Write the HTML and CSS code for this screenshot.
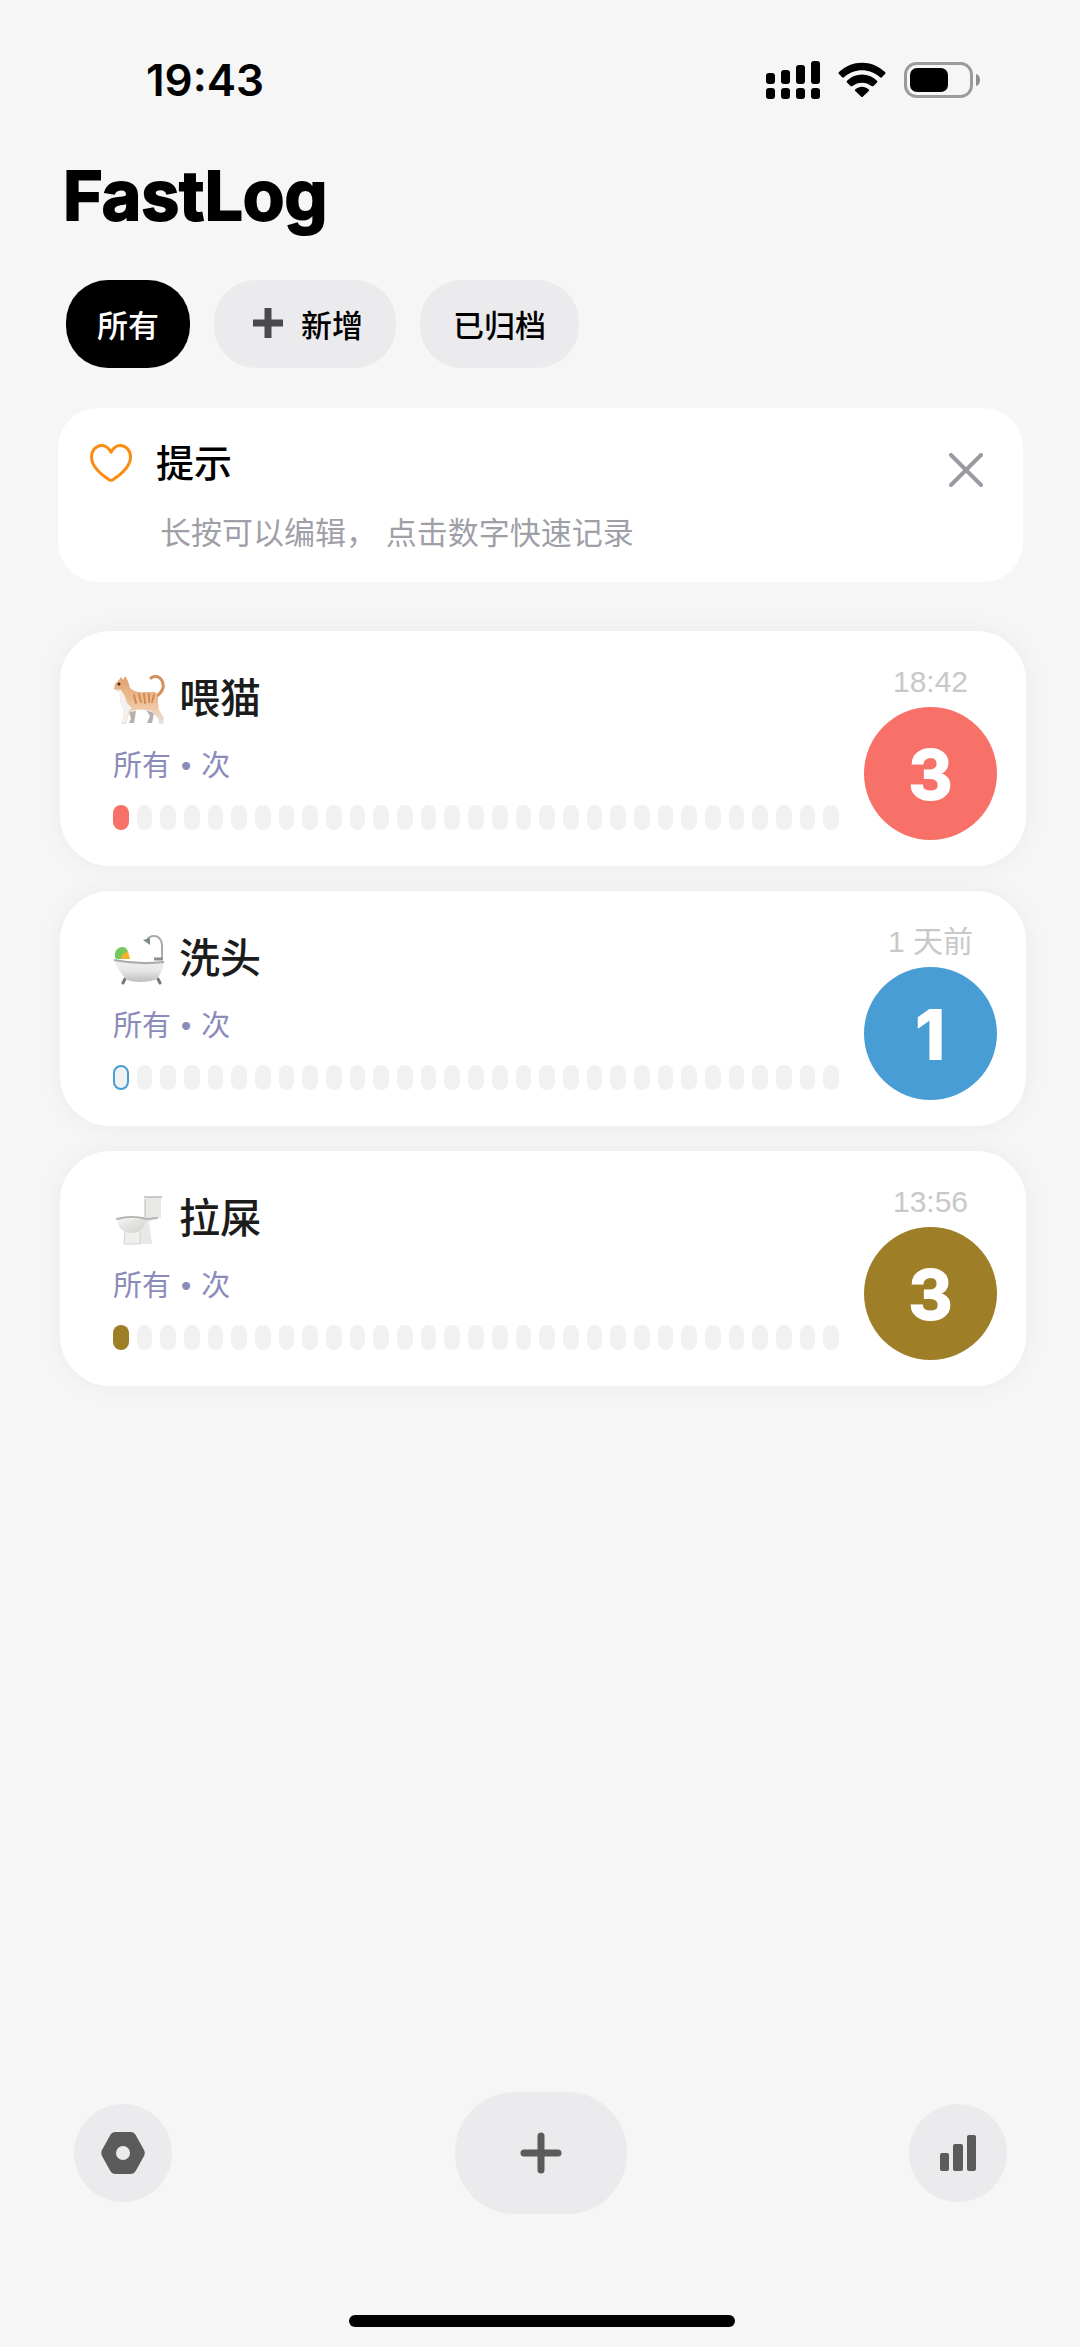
FILE: index.html
```html
<!DOCTYPE html>
<html lang="zh-CN">
<head>
<meta charset="utf-8">
<meta name="viewport" content="width=device-width, initial-scale=1">
<title>FastLog</title>
<link rel="stylesheet" href="styles.css">
</head>
<body>
<div class="app">
  <div class="status">
    <span class="status-time">19:43</span>
    <div class="status-icons">
      <svg width="54" height="38" viewBox="0 0 54 38" aria-hidden="true">
        <rect x="0" y="12" width="9" height="11" rx="3"/><rect x="15" y="9" width="9" height="14" rx="3"/><rect x="30" y="4" width="9" height="19" rx="3"/><rect x="45" y="0" width="9" height="23" rx="3"/>
        <rect x="0" y="27" width="9" height="11" rx="3"/><rect x="15" y="27" width="9" height="11" rx="3"/><rect x="30" y="27" width="9" height="11" rx="3"/><rect x="45" y="27" width="9" height="11" rx="3"/>
      </svg>
      <svg width="48" height="36" viewBox="0 0 48 36" aria-hidden="true">
        <path d="M1 12Q0 11 1 10C14-2.500 34-2.500 47 10Q48 11 47 12L43.500 15.500Q42.700 16 42 15.300C31.500 6 16.500 6 6 15.300Q5.300 16 4.500 15.500Z"/>
        <path d="M9 20.500Q8.200 19.600 9 18.800C17.500 10.500 30.500 10.500 39 18.800Q39.800 19.600 39 20.500L35.500 24Q34.500 24.700 33.500 24C28 19.500 20 19.500 14.500 24Q13.500 24.700 12.500 24Z"/>
        <path d="M17.200 29Q16.500 28.200 17.400 27.300C21.300 23.900 26.700 23.900 30.600 27.300Q31.500 28.200 30.800 29L25 34.600Q24 35.600 23 34.600Z"/>
      </svg>
      <svg width="76" height="36" viewBox="0 0 76 36" aria-hidden="true">
        <rect x="1.500" y="1.500" width="66" height="33" rx="11" fill="none" stroke="#9b9b9b" stroke-width="3"/>
        <rect x="6" y="6" width="38" height="24" rx="7"/>
        <path d="M72 12Q76 13 76 18T72 24Z" fill="#8f8f8f"/>
      </svg>
    </div>
  </div>

  <h1 class="title">FastLog</h1>

  <nav class="chips">
    <button class="chip chip-active" type="button">所有</button>
    <button class="chip" type="button">
      <svg width="42" height="30" viewBox="0 0 42 30" aria-hidden="true"><path d="M21 0V30M6 15H36" stroke="#4a4a4c" stroke-width="7"/></svg>新增</button>
    <button class="chip" type="button">已归档</button>
  </nav>

  <section class="tip">
    <svg class="tip-heart" width="42" height="38" viewBox="0 0 42 38" aria-hidden="true"><path d="M21 8.200C18.800 4 15.500 1.500 11.800 1.500C6 1.500 1.500 6.500 1.500 13C1.500 21.500 9 29 18.500 35.300Q21 37.300 23.500 35.300C33 29 40.500 21.500 40.500 13C40.500 6.500 36 1.500 30.200 1.500C26.500 1.500 23.200 4 21 8.200Z" fill="none" stroke="#fa8c0f" stroke-width="3" stroke-linejoin="round"/></svg>
    <div class="tip-body">
      <h2 class="tip-title">提示</h2>
      <p class="tip-text">长按可以编辑， 点击数字快速记录</p>
    </div>
    <button class="tip-close" type="button" aria-label="关闭">
      <svg width="34" height="34" viewBox="0 0 34 34" aria-hidden="true"><path d="M2 2L32 32M32 2L2 32" stroke="#9a9aa2" stroke-width="4" stroke-linecap="round"/></svg>
    </button>
  </section>

  <main class="list">
    <article class="card red">
      <div class="card-main">
        <h2 class="card-title">
          <svg width="52" height="50" viewBox="0 0 52 50" aria-hidden="true">
            <defs><linearGradient id="fur" x1="0" y1="0" x2="0" y2="1"><stop offset="0" stop-color="#e0a06c"/><stop offset=".6" stop-color="#efc49c"/><stop offset="1" stop-color="#e9e4e0"/></linearGradient></defs>
            <path d="M38 3Q42 0 47 3Q51 7 50 13Q48 19 42 22" fill="none" stroke="#d58f5e" stroke-width="3" stroke-linecap="round"/>
            <path d="M33 35L37 41L34 48H39L41 38ZM16 37L18 44L16 48H21L23 36Z" fill="#b5b0ad"/>
            <path d="M6 5L8 2L10 5L12 1L15 6L17 13Q22 18 32 17L42 17Q46 20 45 28L46 35L51 43L50 49H46L45 43L38 36Q28 33 18 36L15 41L13 49H8L10 45L11 36Q6 26 7 17L1 14L2 9Z" fill="url(#fur)"/>
            <path d="M3 14L8 15Q12 20 14 28L19 33L16 36L12 48H8L11 43L10 34Q6 25 7 17Z" fill="#f3f0ee"/>
            <path d="M21 20L23 28M26 19L28 27M31 19L32 28M36 19L36 27M41 20L39 27" stroke="#d18a52" stroke-width="2" stroke-linecap="round"/>
            <circle cx="6" cy="9" r="1.500" fill="#3c2c20"/>
          </svg>喂猫</h2>
        <p class="card-meta"><span>所有</span><span>•</span><span>次</span></p>
        <div class="days"><i class="on"></i><i></i><i></i><i></i><i></i><i></i><i></i><i></i><i></i><i></i><i></i><i></i><i></i><i></i><i></i><i></i><i></i><i></i><i></i><i></i><i></i><i></i><i></i><i></i><i></i><i></i><i></i><i></i><i></i><i></i><i></i></div>
      </div>
      <div class="card-side">
        <span class="card-time">18:42</span>
        <button class="count" type="button">3</button>
      </div>
    </article>

    <article class="card blue">
      <div class="card-main">
        <h2 class="card-title">
          <svg width="52" height="50" viewBox="0 0 52 50" aria-hidden="true">
            <defs><linearGradient id="tub" x1="0" y1="0" x2="0" y2="1"><stop offset="0" stop-color="#f1f1f1"/><stop offset=".5" stop-color="#e6e6e6"/><stop offset="1" stop-color="#bdbdbd"/></linearGradient></defs>
            <path d="M49 25V10Q48 1 41 1Q36 1 34 5" fill="none" stroke="#a9a9a9" stroke-width="2"/>
            <path d="M30 5L37 3L37 10Z" fill="#7d8b90"/>
            <path d="M41 24H50" stroke="#8d8d8d" stroke-width="3"/>
            <path d="M2 22Q1 13 9 12Q14 12 15 17L11 24H3Z" fill="#76c95f"/>
            <path d="M9 20L15 16L17 24H8Z" fill="#fbb02c"/>
            <path d="M12 44L10 48M45 44L47 48" stroke="#777" stroke-width="3" stroke-linecap="round"/>
            <path d="M1 25Q26 30 51 27Q49 40 42 45Q26 49 14 45Q5 36 1 25Z" fill="url(#tub)"/>
            <path d="M1 25Q26 30 51 27" fill="none" stroke="#aaa" stroke-width="2"/>
          </svg>洗头</h2>
        <p class="card-meta"><span>所有</span><span>•</span><span>次</span></p>
        <div class="days"><i class="today"></i><i></i><i></i><i></i><i></i><i></i><i></i><i></i><i></i><i></i><i></i><i></i><i></i><i></i><i></i><i></i><i></i><i></i><i></i><i></i><i></i><i></i><i></i><i></i><i></i><i></i><i></i><i></i><i></i><i></i><i></i></div>
      </div>
      <div class="card-side">
        <span class="card-time">1 天前</span>
        <button class="count" type="button">1</button>
      </div>
    </article>

    <article class="card gold">
      <div class="card-main">
        <h2 class="card-title">
          <svg width="52" height="50" viewBox="0 0 52 50" aria-hidden="true">
            <defs><linearGradient id="bowl" x1="0" y1="0" x2="1" y2="1"><stop offset="0" stop-color="#f3f3f2"/><stop offset="1" stop-color="#cfcfcd"/></linearGradient></defs>
            <path d="M32 3H48V23H43L36 27L39 49H26V30L32 22Z" fill="#e8e8e7"/>
            <path d="M31 2H49" stroke="#c9c9c8" stroke-width="2"/>
            <path d="M32 4V22" stroke="#b8b8b7" stroke-width="1"/>
            <path d="M12 36L11 49H27V36Z" fill="#f0efee" stroke="#d2d2d0"/>
            <path d="M4 24Q5 37 18 38Q30 38 34 24Z" fill="url(#bowl)"/>
            <path d="M4 24Q18 20 34 24L44 23" fill="none" stroke="#b4b4b2" stroke-width="2" stroke-linecap="round"/>
          </svg>拉屎</h2>
        <p class="card-meta"><span>所有</span><span>•</span><span>次</span></p>
        <div class="days"><i class="on"></i><i></i><i></i><i></i><i></i><i></i><i></i><i></i><i></i><i></i><i></i><i></i><i></i><i></i><i></i><i></i><i></i><i></i><i></i><i></i><i></i><i></i><i></i><i></i><i></i><i></i><i></i><i></i><i></i><i></i><i></i></div>
      </div>
      <div class="card-side">
        <span class="card-time">13:56</span>
        <button class="count" type="button">3</button>
      </div>
    </article>
  </main>

  <footer class="toolbar">
    <button class="tool" type="button" aria-label="设置">
      <svg width="44" height="42" viewBox="0 0 44 42" aria-hidden="true"><path fill-rule="evenodd" d="M14.500 0H29.500Q33 0 34.700 3L43 18Q44.500 21 43 24L34.700 39Q33 42 29.500 42H14.500Q11 42 9.300 39L1 24Q-.5 21 1 18L9.300 3Q11 0 14.500 0ZM22 14A7 7 0 1 0 22 28A7 7 0 1 0 22 14Z" fill="#5b5b5b"/></svg>
    </button>
    <button class="tool tool-add" type="button" aria-label="添加">
      <svg width="42" height="42" viewBox="0 0 42 42" aria-hidden="true"><path d="M21 4V38M4 21H38" stroke="#5b5b5b" stroke-width="7" stroke-linecap="round"/></svg>
    </button>
    <button class="tool" type="button" aria-label="统计">
      <svg width="38" height="36" viewBox="0 0 38 36" aria-hidden="true"><g fill="#5b5b5b"><rect x="1" y="18" width="9" height="18" rx="2"/><rect x="14" y="9" width="10" height="27" rx="2"/><rect x="28" y="0" width="9" height="36" rx="2"/></g></svg>
    </button>
  </footer>
  <div class="home-bar"></div>
</div>
</body>
</html>
```
FILE: styles.css
```css
* {
  box-sizing: border-box;
}

body {
  margin: 0;
  background: #f6f6f6;
  color: #000;
  font-family: Inter, "Noto Sans CJK SC", sans-serif;
}

h1, h2, p {
  margin: 0;
}

button {
  border: 0;
  padding: 0;
  font-family: inherit;
  cursor: pointer;
}

svg {
  display: block;
  flex: none;
}

.app {
  display: flex;
  flex-direction: column;
  min-height: 100vh;
  padding: 52px 54px 20px 58px;
}

/* status bar */
.status {
  display: flex;
  align-items: center;
  justify-content: space-between;
  height: 56px;
  padding: 0 46px 0 88px;
}

.status-time {
  font-size: 44px;
  font-weight: 600;
}

.status-icons {
  display: flex;
  align-items: center;
  gap: 18px;
}

.title {
  margin-top: 47px;
  padding-left: 5px;
  font-size: 68px;
  font-weight: 700;
  line-height: 80px;
  -webkit-text-stroke: 2px currentColor;
}

/* filter chips */
.chips {
  display: flex;
  gap: 24px;
  margin-top: 45px;
  padding-left: 8px;
}

.chip {
  display: flex;
  align-items: center;
  gap: 12px;
  height: 88px;
  padding: 0 33px 2px;
  border-radius: 42px;
  background: #ebebed;
  color: #000;
  font-size: 31px;
  font-weight: 500;
}

.chip-active {
  padding: 0 31px 2px;
  background: #000;
  color: #fff;
}

/* tip */
.tip {
  display: flex;
  align-items: flex-start;
  margin: 40px 3px 0 0;
  padding: 31px 40px 25px 32px;
  border-radius: 40px;
  background: #fff;
}

.tip-heart {
  margin-top: 5px;
}

.tip-body {
  flex: 1;
  padding-left: 24px;
}

.tip-title {
  font-size: 38px;
  font-weight: 500;
  line-height: 48px;
}

.tip-text {
  margin-top: 22px;
  padding-left: 4px;
  color: #9f9fa8;
  font-size: 31px;
  line-height: 48px;
}

.tip-close {
  margin-top: 14px;
  background: none;
}

/* counters */
.list {
  display: flex;
  flex-direction: column;
  gap: 25px;
  margin: 49px 0 0 2px;
}

.card {
  display: flex;
  justify-content: space-between;
  gap: 25px;
  padding: 36px 29px 26px 53px;
  border-radius: 50px;
  background: #fff;
  box-shadow: 0 0 24px rgba(0, 0, 0, 0.05);
}

.red { --accent: #f87169; }
.blue { --accent: #489ed4; }
.gold { --accent: #9f7e28; }

.card-main {
  flex: 1;
}

.card-title {
  display: flex;
  align-items: flex-start;
  gap: 14px;
  height: 64px;
  color: #1c1c1c;
  font-size: 41px;
  font-weight: 500;
  line-height: 62px;
}

.card-title svg {
  margin-top: 8px;
}

.card-meta {
  display: flex;
  gap: 10px;
  margin-top: 15px;
  color: #8b8bbb;
  font-family: "Liberation Sans", "Noto Sans CJK SC", sans-serif;
  font-size: 29px;
  line-height: 40px;
}

.days {
  display: grid;
  grid-template-columns: repeat(31, 1fr);
  gap: 8px;
  margin-top: 19px;
}

.days i {
  height: 25px;
  border-radius: 8px;
  background: #f1f1f1;
}

.days .on {
  background: var(--accent);
}

.days .today {
  border: 2px solid var(--accent);
}

.card-side {
  display: flex;
  flex-direction: column;
  align-items: center;
  width: 133px;
}

.card-time {
  height: 40px;
  color: #c8c8c8;
  font-family: "Liberation Sans", "Noto Sans CJK SC", sans-serif;
  font-size: 30px;
  line-height: 30px;
}

.count {
  width: 133px;
  height: 133px;
  border-radius: 50%;
  background: var(--accent);
  color: #fff;
  font-size: 68px;
  font-weight: 700;
  -webkit-text-stroke: 2px currentColor;
}

/* bottom actions */
.toolbar {
  display: flex;
  align-items: center;
  justify-content: space-between;
  margin-top: auto;
  padding: 0 19px 0 16px;
}

.tool {
  display: grid;
  place-items: center;
  width: 98px;
  height: 98px;
  border-radius: 50%;
  background: #ebebed;
}

.tool-add {
  width: 172px;
  height: 122px;
  border-radius: 60px;
}

.home-bar {
  width: 386px;
  height: 12px;
  margin: 101px auto 0;
  border-radius: 6px;
  background: #000;
}
```
